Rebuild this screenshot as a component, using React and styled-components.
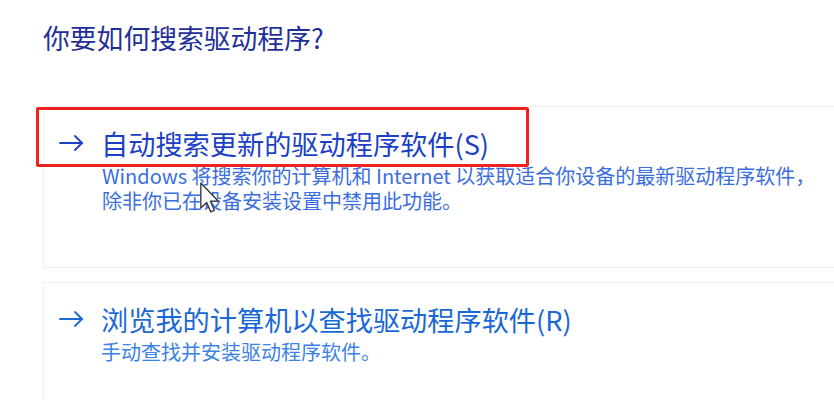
import React from "react";
import styled, { createGlobalStyle } from "styled-components";

const Global = createGlobalStyle`
  html, body { margin: 0; padding: 0; background: #ffffff; }
  body { font-family: "Noto Sans CJK SC", "Noto Sans", sans-serif; }
`;

const Page = styled.div`
  width: 834px;
  height: 400px;
  overflow: hidden;
  position: relative;
  padding: 20px 0 0 43px;
  box-sizing: border-box;
`;

const Title = styled.h1`
  margin: 0;
  font-size: 26.8px;
  line-height: 36px;
  font-weight: 400;
  color: #1f2f98;
  letter-spacing: 0;
`;

const OptionList = styled.div`
  margin-top: 50px;
  display: flex;
  flex-direction: column;
  gap: 14px;
  width: 900px;
`;

const OptionCard = styled.div`
  position: relative;
  box-sizing: border-box;
  border: 1px solid #f0f0f2;
  background: #ffffff;
  padding: 19px 0 ${(p) => p.$bottom}px 15px;
`;

const HeadingRow = styled.div`
  display: flex;
  align-items: center;
  gap: 17px;
  height: 34px;
`;

const Heading = styled.div`
  font-size: 27.2px;
  line-height: 34px;
  color: ${(p) => p.$color};
  white-space: nowrap;
`;

const Description = styled.div`
  margin: 3px 0 0 ${(p) => p.$indent}px;
  font-size: 20px;
  line-height: 25px;
  color: ${(p) => p.$color};
  white-space: nowrap;
`;

const Highlight = styled.div`
  position: absolute;
  left: -8px;
  top: 0px;
  width: 493px;
  height: 60px;
  box-sizing: border-box;
  border: 3px solid #ec2320;
  border-radius: 2px;
  pointer-events: none;
`;

const Cursor = styled.svg`
  position: absolute;
  left: 200px;
  top: 182px;
  width: 20px;
  height: 32px;
  filter: blur(0.4px);
`;

const Arrow = ({ color }) => (
  <svg width="25" height="18" viewBox="0 0 25 18" fill="none">
    <path d="M1 9 H23" stroke={color} strokeWidth="1.8" strokeLinecap="round" />
    <path d="M16 2 L23 9 L16 16" stroke={color} strokeWidth="1.8" strokeLinecap="round" strokeLinejoin="round" />
  </svg>
);

export default function App() {
  return (
    <>
      <Global />
      <Page>
        <Title>你要如何搜索驱动程序?</Title>
        <OptionList>
          <OptionCard $bottom={54}>
            <HeadingRow>
              <Arrow color="#1c3fc8" />
              <Heading $color="#1c3fc8">自动搜索更新的驱动程序软件(S)</Heading>
            </HeadingRow>
            <Description $indent={43} $color="#3a6ee0">
              Windows 将搜索你的计算机和 Internet 以获取适合你设备的最新驱动程序软件，
              <br />
              除非你已在设备安装设置中禁用此功能。
            </Description>
            <Highlight />
          </OptionCard>
          <OptionCard $bottom={60}>
            <HeadingRow>
              <Arrow color="#1a68d6" />
              <Heading $color="#1a68d6">浏览我的计算机以查找驱动程序软件(R)</Heading>
            </HeadingRow>
            <Description $indent={42} $color="#3b82e6">
              手动查找并安装驱动程序软件。
            </Description>
          </OptionCard>
        </OptionList>
        <Cursor viewBox="0 0 12 19">
          <path
            d="M0.5 0.5 L0.5 15.5 L4 12.2 L6.4 17.8 L8.6 16.9 L6.3 11.4 L11 11.4 Z"
            fill="#ffffff"
            stroke="#333333"
            strokeWidth="0.8"
            strokeLinejoin="round"
          />
        </Cursor>
      </Page>
    </>
  );
}
